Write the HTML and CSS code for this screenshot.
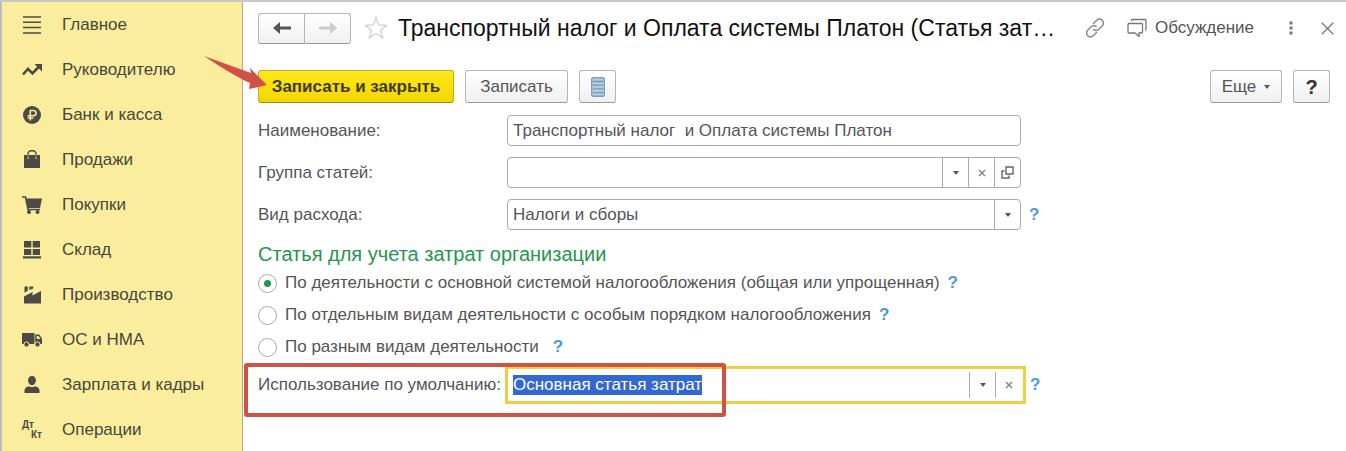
FILE: index.html
```html
<!DOCTYPE html>
<html lang="ru">
<head>
    <meta charset="utf-8">
    <title>Статья затрат</title>
    <link rel="stylesheet" href="styles.css">
</head>
<body>
    <div class="app">
        <nav class="sidebar">
            <a class="menu-item" href="#">
                <svg class="menu-icon" viewBox="0 0 20 20"><path d="M1 2h18M1 7.300h18M1 12.600h18M1 18h18" fill="none" stroke="currentColor" stroke-width="1.500"/></svg>
                Главное
            </a>
            <a class="menu-item" href="#">
                <svg class="menu-icon" viewBox="0 0 20 20"><path d="M1 14.500l5-5.500 4.500 4.500 6.500-7" fill="none" stroke="currentColor" stroke-width="2.600"/><path d="M12.500 4H20v7.500z"/></svg>
                Руководителю
            </a>
            <a class="menu-item" href="#">
                <svg class="menu-icon" viewBox="0 0 20 20"><circle cx="10" cy="10" r="9"/><path d="M8.300 15.500V5.500h3.200a2.600 2.600 0 0 1 0 5.200H5.500M5.500 13h6" fill="none" stroke="#fbed9e" stroke-width="1.600"/></svg>
                Банк и касса
            </a>
            <a class="menu-item" href="#">
                <svg class="menu-icon" viewBox="0 0 20 20"><path d="M2 5h3v3.500h2V5h6v3.500h2V5h3v13H2z"/><path d="M6 8V3.800a3 3 0 0 1 3-3h2a3 3 0 0 1 3 3V8" fill="none" stroke="currentColor" stroke-width="1.400"/></svg>
                Продажи
            </a>
            <a class="menu-item" href="#">
                <svg class="menu-icon" viewBox="0 0 20 20"><path d="M4 3.500h16l-2 9.500H6z"/><path d="M0 2h3.500l2.500 12.500h12" fill="none" stroke="currentColor" stroke-width="1.600"/><circle cx="7" cy="17" r="2"/><circle cx="15.500" cy="17" r="2"/></svg>
                Покупки
            </a>
            <a class="menu-item" href="#">
                <svg class="menu-icon" viewBox="0 0 20 20"><path d="M2 1h7.300v6.500H2zM10.700 1H18v6.500h-7.300zM2 9h7.300v6H2zM10.700 9H18v6h-7.300zM1 16.200h18v2.300H1z"/></svg>
                Склад
            </a>
            <a class="menu-item" href="#">
                <svg class="menu-icon" viewBox="0 0 20 20"><path d="M2.500 1.500h3.300v4.200l-3.300 2zM7.300 1.500h4v2L7.300 5zM2 11.500l8.500-4.500v3.500L19 6v12.500H2z"/></svg>
                Производство
            </a>
            <a class="menu-item" href="#">
                <svg class="menu-icon" viewBox="0 0 20 20"><path d="M0 3h12.500v11H0z"/><path fill-rule="evenodd" d="M13.200 4.500h4l2.800 4V14h-6.800zM14.700 6v3h3.800l-2-3z"/><circle cx="4.500" cy="14.500" r="2.600" stroke="#fbed9e"/><circle cx="15.500" cy="14.500" r="2.600" stroke="#fbed9e"/></svg>
                ОС и НМА
            </a>
            <a class="menu-item" href="#">
                <svg class="menu-icon" viewBox="0 0 20 20"><path d="M10 1c2.500 0 3.900 1.700 3.900 4.300 0 2.200-1.500 4.900-3.900 4.900S6.100 7.500 6.100 5.300C6.100 2.700 7.500 1 10 1zM2.500 18v-2.500c0-2.300 1.700-3.800 4.500-4.300 1.700 1.200 4.300 1.200 6 0 2.800.5 4.500 2 4.500 4.300V18z"/></svg>
                Зарплата и кадры
            </a>
            <a class="menu-item" href="#">
                <span class="menu-icon dtkt"><b>Дт</b><b class="kt">Кт</b></span>
                Операции
            </a>
        </nav>

        <main class="main">
            <header class="header">
                <div class="nav-buttons">
                    <button class="button nav-button" type="button" aria-label="Назад">
                        <svg width="18" height="14" viewBox="0 0 18 14"><path d="M0 7l7-6v4.500h11v3H7V13z" fill="#555"/></svg>
                    </button>
                    <button class="button nav-button" type="button" aria-label="Вперед" disabled>
                        <svg width="18" height="14" viewBox="0 0 18 14"><path d="M18 7l-7-6v4.500H0v3h11V13z" fill="#ccc"/></svg>
                    </button>
                </div>
                <button class="icon-button star" type="button" aria-label="В избранное">
                    <svg width="24" height="24" viewBox="0 0 24 24"><path d="M12 1.500l2.800 7.400 7.900.4-6.200 4.900 2.100 7.600-6.600-4.300-6.600 4.300 2.100-7.600L1.300 9.300l7.900-.4z" fill="none" stroke="#d2d2d2" stroke-width="1.400"/></svg>
                </button>
                <h1 class="title">Транспортный налог и Оплата системы Платон (Статья зат…</h1>
                <button class="icon-button link" type="button" aria-label="Ссылка">
                    <svg width="20" height="20" viewBox="0 0 20 20"><g fill="none" stroke="#888" stroke-width="1.500" stroke-linecap="round"><path d="M8.500 5.500l3.200-3.200a3.800 3.800 0 0 1 5.600 0 3.800 3.800 0 0 1 0 5.400l-3.500 3.500a3.800 3.800 0 0 1-5 .4"/><path d="M11.500 14.500l-3.200 3.200a3.800 3.800 0 0 1-5.600 0 3.800 3.800 0 0 1 0-5.400l3.500-3.500a3.800 3.800 0 0 1 5-.4"/></g></svg>
                </button>
                <button class="icon-button discuss" type="button">
                    <svg width="20" height="20" viewBox="0 0 20 20"><g fill="none" stroke="#777" stroke-width="1.300" stroke-linejoin="round"><path d="M1.500 5.500h13a1 1 0 0 1 1 1V14a1 1 0 0 1-1 1H12v3.500L8 15H2a1 1 0 0 1-1-1V6.500z"/><path d="M4.500 3V2.500a1 1 0 0 1 1-1H18a1 1 0 0 1 1 1V11a1 1 0 0 1-1 1"/></g></svg>
                    Обсуждение
                </button>
                <button class="icon-button dots" type="button" aria-label="Меню">
                    <svg width="4" height="14" viewBox="0 0 4 14"><path d="M.5.500h3v3h-3zM.5 5.500h3v3h-3zM.5 10.500h3v3h-3z" fill="#777"/></svg>
                </button>
                <button class="icon-button" type="button" aria-label="Закрыть">
                    <svg width="13" height="13" viewBox="0 0 13 13"><path d="M.7.700l11.600 11.600M12.300.700L.7 12.300" stroke="#777" stroke-width="1.300"/></svg>
                </button>
            </header>

            <div class="toolbar">
                <button class="button primary" type="button">Записать и закрыть</button>
                <button class="button save" type="button">Записать</button>
                <button class="button square" type="button" aria-label="Список">
                    <svg width="14" height="20" viewBox="0 0 14 20"><rect x=".7" y=".7" width="12.600" height="18.600" rx="1.500" fill="#b4cfe2" stroke="#7f9fb7" stroke-width="1.400"/><path d="M2 4.500h10M2 8.200h10M2 11.900h10M2 15.600h10" stroke="#7797b0" stroke-width="1.300"/></svg>
                </button>
                <button class="button more" type="button">Еще <span class="arrow"></span></button>
                <button class="button square help-button" type="button">?</button>
            </div>

            <form class="form">
                <div class="row">
                    <label class="label" for="name">Наименование:</label>
                    <div class="field"><input class="input" id="name" type="text" value="Транспортный налог  и Оплата системы Платон"></div>
                </div>
                <div class="row">
                    <label class="label" for="group">Группа статей:</label>
                    <div class="field">
                        <input class="input" id="group" type="text">
                        <button class="field-button" type="button" aria-label="Выбрать"><span class="arrow"></span></button>
                        <button class="field-button" type="button" aria-label="Очистить"><svg width="8" height="8" viewBox="0 0 8 8"><path d="M1 1l6 6M7 1L1 7" stroke="#888" stroke-width="1.500"/></svg></button>
                        <button class="field-button" type="button" aria-label="Открыть"><svg width="13" height="13" viewBox="0 0 13 13"><path d="M5 1h7v7H5zM3.500 5H1v7h7V9.500" fill="none" stroke="#666" stroke-width="1.400"/></svg></button>
                    </div>
                </div>
                <div class="row">
                    <label class="label" for="kind">Вид расхода:</label>
                    <div class="field select-field">
                        <select class="input" id="kind"><option>Налоги и сборы</option></select>
                        <span class="field-button"><span class="arrow"></span></span>
                    </div>
                    <a class="hint" href="#">?</a>
                </div>

                <fieldset class="group">
                    <legend class="group-title">Статья для учета затрат организации</legend>
                    <div class="option">
                        <input class="radio" type="radio" name="activity" id="main-tax" checked>
                        <label for="main-tax">По деятельности с основной системой налогообложения (общая или упрощенная)</label>
                        <a class="hint" href="#">?</a>
                    </div>
                    <div class="option">
                        <input class="radio" type="radio" name="activity" id="special-tax">
                        <label for="special-tax">По отдельным видам деятельности с особым порядком налогообложения</label>
                        <a class="hint" href="#">?</a>
                    </div>
                    <div class="option">
                        <input class="radio" type="radio" name="activity" id="mixed">
                        <label for="mixed">По разным видам деятельности</label>
                        <a class="hint wide" href="#">?</a>
                    </div>
                </fieldset>

                <div class="row usage">
                    <label class="label" for="usage">Использование по умолчанию:</label>
                    <div class="field active">
                        <input class="input" id="usage" type="text" value="Основная статья затрат">
                        <button class="field-button" type="button" aria-label="Выбрать"><span class="arrow"></span></button>
                        <button class="field-button" type="button" aria-label="Очистить"><svg width="8" height="8" viewBox="0 0 8 8"><path d="M1 1l6 6M7 1L1 7" stroke="#888" stroke-width="1.500"/></svg></button>
                    </div>
                    <a class="hint" href="#">?</a>
                    <div class="mark"></div>
                </div>
            </form>

            <svg class="pointer" width="64" height="36" viewBox="0 0 64 36"><path d="M0 0L47 17 46 12 63 29 45 33 46 27 C36 23 18 12 0 0z" fill="#cf5245"/></svg>
        </main>
    </div>

    <script>
        // Select the default value so it can be overwritten right away
        const usage = document.getElementById('usage');
        usage.focus();
        usage.select();
    </script>
</body>
</html>
```
FILE: styles.css
```css
* {
    box-sizing: border-box;
}
body {
    margin: 0;
    font-family: "Liberation Sans", Arial, sans-serif;
    font-size: 17px;
    line-height: 20px;
    color: #555;
    background-color: #fff;
}
button, input, select {
    font: inherit;
    color: inherit;
}
a {
    text-decoration: none;
}
.app {
    display: flex;
    min-height: 100vh;
    overflow: hidden;
    border-top: 2px solid #c8c8c8;
}

/* Sidebar */
.sidebar {
    flex: 0 0 243px;
    border-left: 2px solid #bbb;
    border-right: 1px solid #b5ab80;
    background-color: #fbed9e;
}
.menu-item {
    display: flex;
    align-items: center;
    gap: 20px;
    height: 45px;
    padding-left: 20px;
    color: #47463c;
}
.menu-icon {
    flex: none;
    width: 20px;
    height: 20px;
    fill: currentColor;
    color: #4b4a45;
}
.dtkt {
    display: flex;
    flex-direction: column;
    font-size: 10px;
    line-height: 10px;
}
.kt {
    align-self: flex-end;
}

/* Header */
.main {
    position: relative;
    flex: 1;
    min-width: 0;
    padding: 10px 12px 0 15px;
}
.header {
    display: flex;
    align-items: center;
    height: 32px;
}
.button {
    display: flex;
    align-items: center;
    justify-content: center;
    height: 33px;
    padding: 0;
    border: 1px solid #b5b5b5;
    border-bottom-color: #999;
    border-radius: 3px;
    background: linear-gradient(#fff, #f0f0f0);
}
.nav-buttons {
    display: flex;
}
.nav-button {
    width: 46px;
    height: 31px;
}
.nav-button:first-child {
    width: 47px;
    border-radius: 3px 0 0 3px;
}
.nav-button:last-child {
    border-left: 0;
    border-radius: 0 3px 3px 0;
}
.icon-button {
    display: flex;
    flex: none;
    align-items: center;
    gap: 8px;
    padding: 0;
    border: 0;
    background: none;
}
.star {
    margin: 0 10px 0 13px;
}
.title {
    flex: 1;
    min-width: 0;
    margin: 0;
    overflow: hidden;
    font-size: 23px;
    font-weight: normal;
    line-height: 30px;
    color: #111;
    text-overflow: ellipsis;
    white-space: nowrap;
}
.link {
    margin: 0 22px 0 16px;
}
.dots {
    margin: 0 28px 0 35px;
}

/* Toolbar */
.toolbar {
    display: flex;
    gap: 11px;
    margin-top: 26px;
    padding-right: 4px;
}
.primary {
    width: 196px;
    border-color: #c9ad10;
    border-bottom-color: #9d8812;
    background: linear-gradient(#ffe81c, #f3d600);
    font-weight: bold;
    color: #3f3b1c;
}
.save {
    width: 103px;
}
.square {
    width: 37px;
}
.more {
    gap: 8px;
    width: 72px;
    margin-left: auto;
}
.help-button {
    font-size: 20px;
    font-weight: bold;
    color: #333;
}
.arrow {
    border: 3px solid transparent;
    border-top: 4px solid #555;
    border-bottom: 0;
}

/* Form */
.form {
    margin-top: 12px;
}
.row {
    position: relative;
    display: flex;
    align-items: center;
    margin-bottom: 11px;
}
.label {
    flex: 0 0 249px;
}
.field {
    display: flex;
    flex: 0 1 514px;
    height: 31px;
    border: 1px solid #aaa;
    border-radius: 4px;
    background-color: #fff;
}
.input {
    flex: 1;
    min-width: 0;
    padding: 0 5px;
    border: 0;
    outline: 0;
    background: none;
    appearance: none;
}
.input::selection {
    background-color: #3367d1;
    color: #fff;
}
.field-button {
    display: flex;
    flex: none;
    align-items: center;
    justify-content: center;
    width: 26px;
    padding: 0;
    border: 0;
    border-left: 1px solid #aaa;
    background: none;
}
.select-field {
    display: grid;
    grid-template-columns: 1fr 26px;
}
.select-field .input {
    grid-area: 1 / 1 / 2 / 3;
}
.select-field .field-button {
    grid-area: 1 / 2;
    pointer-events: none;
}
.hint {
    margin-left: 8px;
    font-weight: bold;
    color: #4a9bd4;
}
.group {
    margin: 12px 0 0;
    padding: 0;
    border: 0;
}
.group-title {
    padding: 0;
    font-size: 20px;
    line-height: 25px;
    color: #259650;
}
.option {
    display: flex;
    align-items: center;
    height: 32px;
}
.option label {
    margin-left: 8px;
}
.option .wide {
    margin-left: 14px;
}
.radio {
    width: 19px;
    height: 19px;
    margin: 0;
    border: 1px solid #aaa;
    border-radius: 50%;
    background-color: #fff;
    appearance: none;
}
.radio:checked {
    background-image: radial-gradient(circle, #1a9850 3px, transparent 4px);
}
.usage {
    margin-top: 3px;
}
.usage .label {
    flex-basis: 247px;
    white-space: nowrap;
}
.active {
    flex-basis: 521px;
    height: 38px;
    padding: 3px 2px;
    border: 3px solid #f0cd45;
    border-radius: 0;
}
.active .input {
    padding: 0 3px;
}
.usage .hint {
    margin-left: 4px;
}

/* Highlight marks */
.mark {
    position: absolute;
    top: -3px;
    left: -14px;
    width: 482px;
    height: 54px;
    border: 4px solid #cf5245;
    border-radius: 3px;
    pointer-events: none;
}
.pointer {
    position: absolute;
    top: 54px;
    left: -39px;
    pointer-events: none;
}
```
